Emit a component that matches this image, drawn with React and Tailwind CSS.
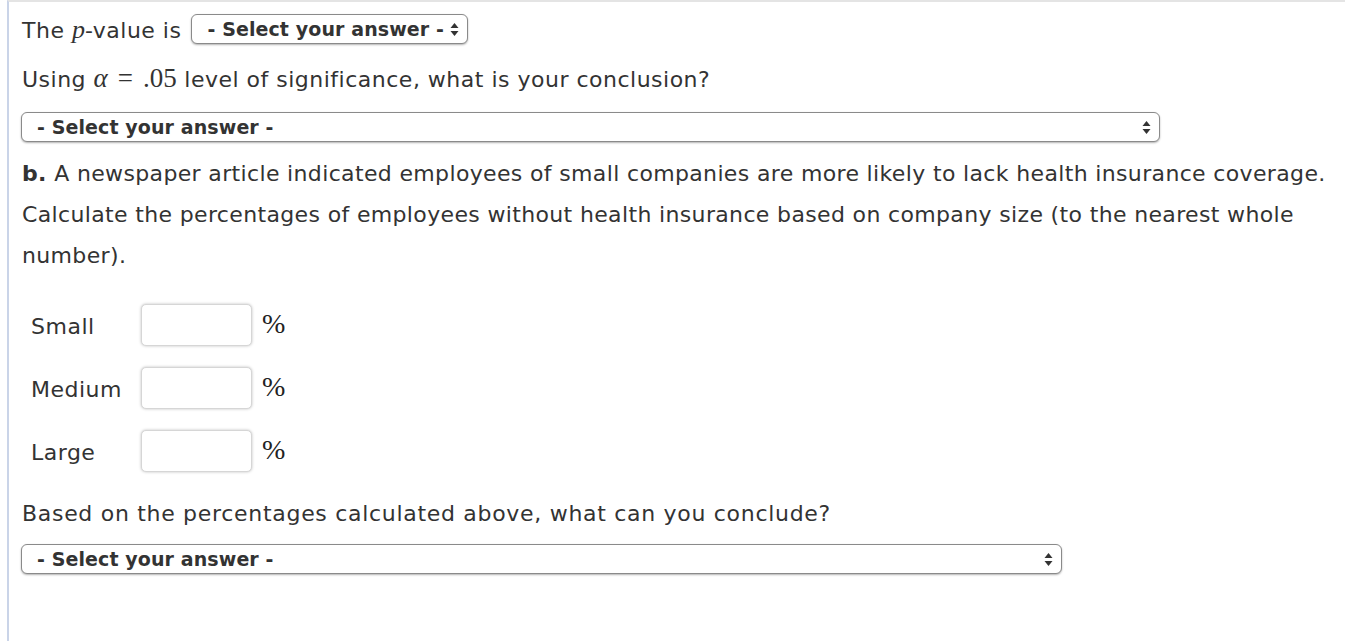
import React from "react";

const sans = { fontFamily: '"DejaVu Sans", Verdana, sans-serif' };

function Arrows() {
  return (
    <svg width="9" height="15" viewBox="0 0 9 15" className="shrink-0">
      <path d="M4.5 1 L8.5 6 L0.5 6 Z" fill="#333" />
      <path d="M4.5 14 L8.5 9 L0.5 9 Z" fill="#333" />
    </svg>
  );
}

function Select({ className = "" }) {
  return (
    <div
      className={
        "flex items-center justify-between h-[30px] rounded-[6px] border border-[#8a8a8a] bg-white pl-[15px] pr-[8px] shadow-[0_1px_2px_rgba(0,0,0,0.3)] " +
        className
      }
    >
      <span className="font-['DejaVu_Sans',sans-serif] font-bold text-[19px] tracking-[0.1px] text-[#333] leading-none whitespace-nowrap">
        - Select your answer -
      </span>
      <Arrows />
    </div>
  );
}

function Row({ label }) {
  return (
    <div className="flex items-center h-[42px]">
      <span className="w-[110px] pt-[3px]">{label}</span>
      <div className="w-[111px] h-[42px] rounded-[5px] border border-[#d6d6d6] bg-white shadow-[0_0_3px_rgba(0,0,0,0.25)]" />
      <span className="ml-[10px] -mt-[2px] font-['Liberation_Serif',serif] text-[28px] text-[#222] leading-none tracking-normal">
        %
      </span>
    </div>
  );
}

export default function App() {
  return (
    <div className="min-h-screen bg-white pl-[7px]" style={sans}>
      <div className="min-h-[641px] border-t-2 border-l-2 border-t-[#e4e4e4] border-l-[#cad4e8] pl-[13px] pt-[12px] text-[#333] text-[22px] tracking-[0.5px]">
        <div className="flex items-center h-[30px]">
          <span className="whitespace-nowrap">
            The{" "}
            <span className="font-['Liberation_Serif',serif] italic text-[26px] tracking-normal">p</span>
            -value is
          </span>
          <Select className="ml-[10px] w-[277px]" />
        </div>

        <p className="mt-[14px] leading-[41px] whitespace-nowrap">
          Using{" "}
          <span className="font-['Liberation_Serif',serif] text-[27px] tracking-normal">
            <span className="italic">α</span>
            <span className="mx-[10px]">=</span>.05
          </span>{" "}
          level of significance, what is your conclusion?
        </p>

        <Select className="mt-[12px] -ml-px w-[1139px]" />

        <p className="mt-[11px] leading-[41px] whitespace-nowrap tracking-[0.35px]">
          <span className="font-bold">b.</span> A newspaper article indicated employees of small companies are more likely to lack health insurance coverage.
          <br />
          Calculate the percentages of employees without health insurance based on company size (to the nearest whole
          <br />
          number).
        </p>

        <div className="mt-[28px] ml-[9px] flex flex-col gap-[21px]">
          <Row label="Small" />
          <Row label="Medium" />
          <Row label="Large" />
        </div>

        <p className="mt-[21px] leading-[41px] whitespace-nowrap tracking-[0.7px]">
          Based on the percentages calculated above, what can you conclude?
        </p>

        <Select className="mt-[10px] -ml-px w-[1041px]" />
      </div>
    </div>
  );
}
